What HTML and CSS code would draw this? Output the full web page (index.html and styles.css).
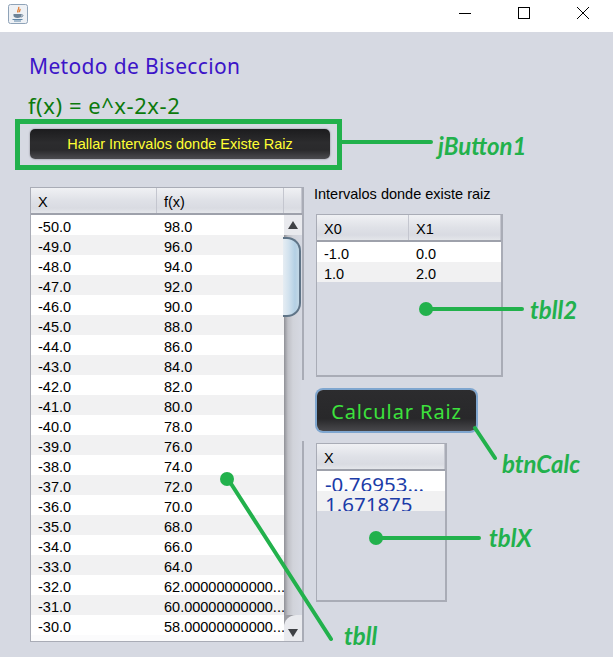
FILE: index.html
```html
<!DOCTYPE html>
<html lang="es">
<head>
<meta charset="utf-8">
<title>Metodo de Biseccion</title>
<link rel="stylesheet" href="styles.css">
</head>
<body>
<div class="window">
  <header class="titlebar">
    <svg class="app-icon" width="20" height="20" viewBox="0 0 20 20">
      <rect x="0.5" y="0.5" width="19" height="19" rx="2" fill="#eef1f5" stroke="#8fa3b8"/>
      <path d="M10.5 3c1.5 2-2 3-.5 5.5M12 5c.5 1.2-1 1.8-.5 3.2" fill="none" stroke="#e0813a" stroke-width="1.4"/>
      <path d="M5.5 10h8v1.5c0 1.5-1.5 2.5-4 2.5s-4-1-4-2.5z" fill="#6d8398"/>
      <path d="M13.5 10.5c2 0 2 2.5-.8 2.5" fill="none" stroke="#6d8398"/>
      <path d="M4.5 15.5h10M6 17h7" stroke="#5f86a8"/>
    </svg>
    <div class="controls">
      <svg width="14" height="14" viewBox="0 0 14 14"><path d="M1 7.5h12" stroke="#000"/></svg>
      <svg width="14" height="14" viewBox="0 0 14 14"><rect x="1.5" y="1.5" width="11" height="11" fill="none" stroke="#000"/></svg>
      <svg width="14" height="14" viewBox="0 0 14 14"><path d="M1 1l12 12M13 1L1 13" stroke="#000" fill="none"/></svg>
    </div>
  </header>
  <main class="pane">
    <h1 class="title">Metodo de Biseccion</h1>
    <p class="formula">f(x) = e^x-2x-2</p>
    <button class="dark-btn find-btn">Hallar Intervalos donde Existe Raiz</button>
    <div class="columns">
      <section class="table main-table">
        <div class="head">
          <div class="cell c-x">X</div><div class="cell c-fx">f(x)</div><div class="cell c-corner"></div>
        </div>
        <div class="body-wrap">
          <div class="rows">
            <div class="row"><div class="cell c-x">-50.0</div><div class="cell c-fx">98.0</div></div>
            <div class="row"><div class="cell c-x">-49.0</div><div class="cell c-fx">96.0</div></div>
            <div class="row"><div class="cell c-x">-48.0</div><div class="cell c-fx">94.0</div></div>
            <div class="row"><div class="cell c-x">-47.0</div><div class="cell c-fx">92.0</div></div>
            <div class="row"><div class="cell c-x">-46.0</div><div class="cell c-fx">90.0</div></div>
            <div class="row"><div class="cell c-x">-45.0</div><div class="cell c-fx">88.0</div></div>
            <div class="row"><div class="cell c-x">-44.0</div><div class="cell c-fx">86.0</div></div>
            <div class="row"><div class="cell c-x">-43.0</div><div class="cell c-fx">84.0</div></div>
            <div class="row"><div class="cell c-x">-42.0</div><div class="cell c-fx">82.0</div></div>
            <div class="row"><div class="cell c-x">-41.0</div><div class="cell c-fx">80.0</div></div>
            <div class="row"><div class="cell c-x">-40.0</div><div class="cell c-fx">78.0</div></div>
            <div class="row"><div class="cell c-x">-39.0</div><div class="cell c-fx">76.0</div></div>
            <div class="row"><div class="cell c-x">-38.0</div><div class="cell c-fx">74.0</div></div>
            <div class="row"><div class="cell c-x">-37.0</div><div class="cell c-fx">72.0</div></div>
            <div class="row"><div class="cell c-x">-36.0</div><div class="cell c-fx">70.0</div></div>
            <div class="row"><div class="cell c-x">-35.0</div><div class="cell c-fx">68.0</div></div>
            <div class="row"><div class="cell c-x">-34.0</div><div class="cell c-fx">66.0</div></div>
            <div class="row"><div class="cell c-x">-33.0</div><div class="cell c-fx">64.0</div></div>
            <div class="row"><div class="cell c-x">-32.0</div><div class="cell c-fx">62.00000000000...</div></div>
            <div class="row"><div class="cell c-x">-31.0</div><div class="cell c-fx">60.00000000000...</div></div>
            <div class="row"><div class="cell c-x">-30.0</div><div class="cell c-fx">58.00000000000...</div></div>
          </div>
          <div class="scrollbar">
            <div class="sb-btn"><span class="arrow-up"></span></div>
            <div class="sb-track"><div class="sb-thumb"></div></div>
            <div class="sb-btn sb-down"><span class="arrow-down"></span></div>
          </div>
        </div>
      </section>
      <div class="side">
        <p class="caption">Intervalos donde existe raiz</p>
        <section class="table interval-table">
          <div class="head">
            <div class="cell c-x0">X0</div><div class="cell c-x1">X1</div>
          </div>
          <div class="rows">
            <div class="row"><div class="cell c-x0">-1.0</div><div class="cell c-x1">0.0</div></div>
            <div class="row"><div class="cell c-x0">1.0</div><div class="cell c-x1">2.0</div></div>
          </div>
        </section>
        <button class="dark-btn calc-btn">Calcular Raiz</button>
        <section class="table roots-table">
          <div class="head"><div class="cell">X</div></div>
          <div class="rows">
            <div class="row root"><div class="cell">-0.76953...</div></div>
            <div class="row root"><div class="cell">1.671875</div></div>
          </div>
        </section>
      </div>
    </div>
    <div class="border-gap"></div>
  </main>
  <svg class="notes" width="613" height="657" viewBox="0 0 613 657">
    <rect x="17.5" y="121.5" width="322" height="46" fill="none" stroke="#22b14c" stroke-width="5"/>
    <path d="M341 142H431M429 309H522M475 428L495 458M379 538H479M228 479L331 639" fill="none" stroke="#22b14c" stroke-width="4" stroke-linecap="round"/>
    <circle cx="426" cy="309" r="7" fill="#22b14c"/>
    <circle cx="376" cy="538" r="7" fill="#22b14c"/>
    <circle cx="227" cy="479" r="7" fill="#22b14c"/>
  </svg>
  <span class="note n-jbutton">jButton1</span>
  <span class="note n-tbll2">tbll2</span>
  <span class="note n-calc">btnCalc</span>
  <span class="note n-tblx">tblX</span>
  <span class="note n-tbll">tbll</span>
</div>
</body>
</html>
```

FILE: styles.css
```css
* { box-sizing: border-box; }
html, body { margin: 0; padding: 0; }
body { width: 613px; height: 657px; overflow: hidden; font-family: "Liberation Sans", Arial, sans-serif; font-size: 14.5px; color: #000; }
.window { position: relative; width: 613px; height: 657px; display: flex; flex-direction: column; background: #d6d9e2; }
.titlebar { height: 32px; background: #fff; display: flex; align-items: center; justify-content: space-between; padding: 0 23px 0 8px; flex: none; }
.app-icon { margin-top: -5px; }
.controls { display: flex; gap: 45px; margin-top: -7px; }
.pane { position: relative; flex: 1; padding: 20px 0 0 30px; }
.title { margin: 0 0 0 -1px; height: 28px; font: 400 21px/28px "Noto Sans", sans-serif; letter-spacing: 0.35px; color: #3c14c8; }
.formula { margin: 11px 0 0 -2px; height: 28px; font: 400 22px/28px "Noto Sans", sans-serif; letter-spacing: 0.55px; color: #0c7a0c; }
.dark-btn { display: block; border: 0; font-family: inherit; cursor: pointer; }
.find-btn { margin-top: 10px; width: 300px; height: 30px; border-radius: 5px; color: #ffff33; font-size: 14.5px; background: linear-gradient(#1c1c1e 0%, #2c2c2e 45%, #2a2a2c 70%, #4c4c50 100%); box-shadow: 0 0 2px #7a7a80; padding: 0 0 1px 0; }
.columns { display: flex; margin-top: 28px; }
.table { background: #d6d9e2; border: 1px solid #a9acb6; border-width: 1px 2px 2px 1px; }
.head { height: 27px; display: flex; border-bottom: 2px solid #9ea1ab; background: linear-gradient(#f0f1f4 0%, #dfe1e7 50%, #d9dbe2 80%, #e4e6ea 100%); }
.head .cell { height: 100%; line-height: 29px; border-right: 1px solid #c4c6cf; }
.row { height: 20px; display: flex; background: #fff; }
.row:nth-child(even) { background: #f1f1f2; }
.cell { padding-left: 7px; line-height: 24px; white-space: nowrap; overflow: hidden; height: 20px; }
.main-table { width: 274px; height: 455px; }
.c-x { width: 126px; }
.c-fx { width: 127px; }
.c-corner { width: 18px; }
.body-wrap { display: flex; height: 426px; }
.rows { flex: 1; }
.main-table .rows { width: 253px; flex: none; background: #fbfbfc; }
.scrollbar { width: 18px; display: flex; flex-direction: column; background: #9c9da3; }
.sb-btn { height: 20px; flex: none; display: flex; align-items: center; justify-content: center; background: #e9eaee; }
.sb-down { height: 26px; padding-top: 10px; border-radius: 12px 0 0 0; }
.arrow-up { width: 0; height: 0; border: 5px solid transparent; border-top: 0; border-bottom: 8px solid #3f4145; }
.arrow-down { width: 0; height: 0; border: 5px solid transparent; border-bottom: 0; border-top: 8px solid #3f4145; }
.sb-track { flex: 1; background: linear-gradient(90deg, #8f9096 0%, #bfc0c6 22%, #d1d3da 50%, #d6d9e2 100%); padding-top: 2px; }
.sb-thumb { height: 80px; width: 18px; margin-left: -1px; border: 2px solid #5f7487; border-left: 0; border-radius: 0 14px 14px 0; background: linear-gradient(90deg, #e6edf3 0%, #d2e2ee 35%, #b4d0e4 75%, #c3d8e6 100%); }
.side { margin-left: 10px; width: 200px; }
.caption { margin: -1px 0 0 0; height: 28px; line-height: 16px; }
.interval-table { margin-left: 2px; width: 187px; height: 163px; }
.c-x0 { width: 92px; }
.c-x1 { width: 92px; }
.calc-btn { margin: 13px 0 0 3px; width: 159px; height: 41px; padding: 2px 0 0; border-radius: 6px; color: #3de23d; font: 400 20px "Noto Sans", sans-serif; letter-spacing: 0.9px; background: linear-gradient(#2c2c2e 0%, #28282a 70%, #48484c 100%); box-shadow: 0 0 0 2px #7fa6cf; }
.roots-table { margin: 12px 0 0 2px; width: 131px; height: 159px; }
.roots-table .head .cell { width: 100%; }
.root .cell { font: 400 20.5px/27px "Noto Sans", sans-serif; color: #1c3ca8; padding-left: 8px; }
.border-gap { position: absolute; left: 302px; top: 348px; width: 3px; height: 61px; background: #d6d9e2; }
.notes { position: absolute; left: 0; top: 0; pointer-events: none; }
.note { position: absolute; font: italic 700 24px/28px Lato, sans-serif; color: #22b14c; white-space: nowrap; }
.n-jbutton { left: 438px; top: 132px; }
.n-tbll2 { left: 530px; top: 296px; }
.n-calc { left: 502px; top: 450px; }
.n-tblx { left: 489px; top: 524px; }
.n-tbll { left: 344px; top: 622px; }
```
